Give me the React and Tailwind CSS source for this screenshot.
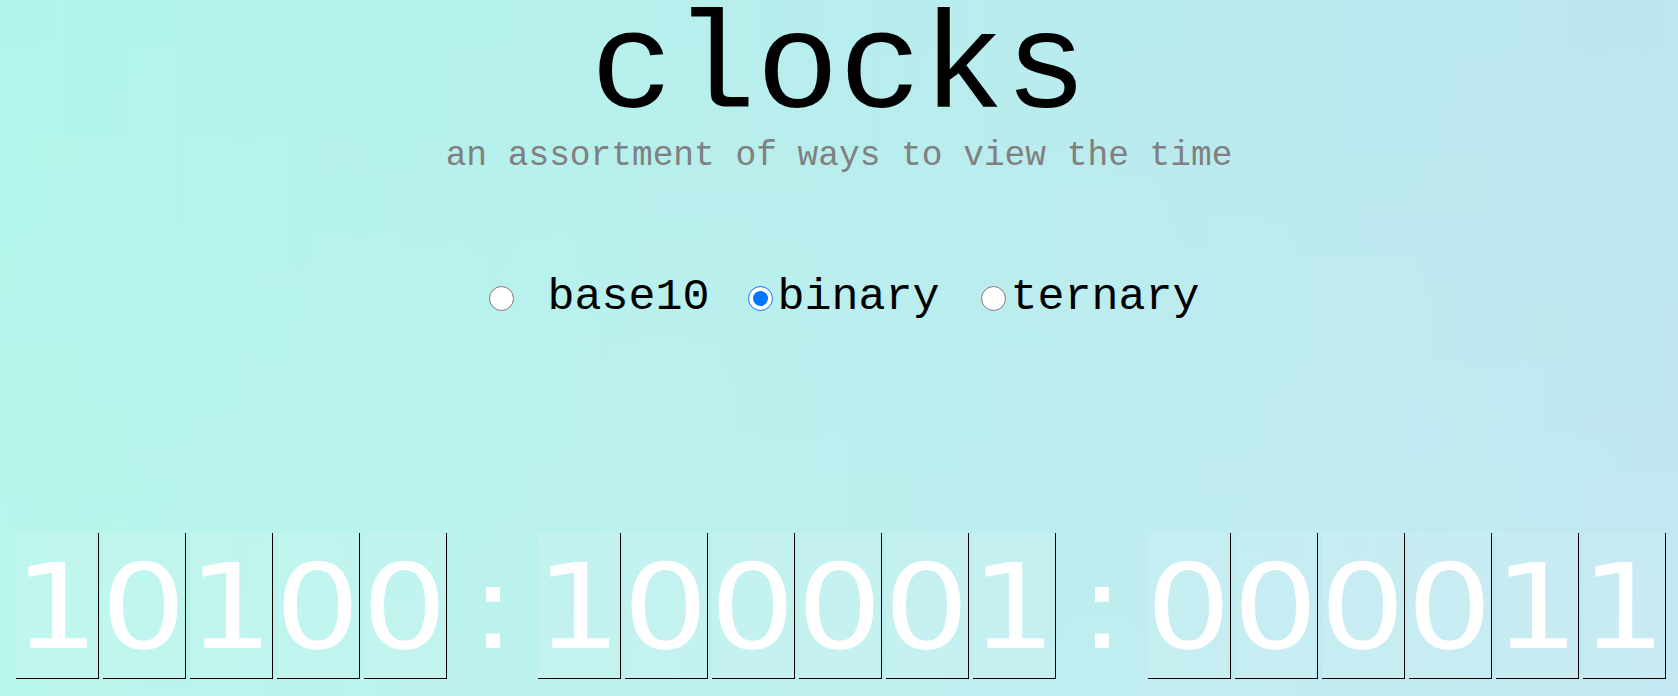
import React, { useState } from 'react';

const mono = { fontFamily: '"Liberation Mono", "DejaVu Sans Mono", monospace' };

// hh:mm:ss shown in binary, one box per digit
const groups = [
  ['1', '0', '1', '0', '0'],
  ['1', '0', '0', '0', '0', '1'],
  ['0', '0', '0', '0', '1', '1'],
];

function Digit({ value }) {
  return (
    <div className="mx-[2px] box-border h-[146px] w-[83px] shrink-0 border-r border-b border-black bg-white/10 pt-[4px] text-center leading-[141px] text-white">
      <span className="inline-block scale-x-[114%]">{value}</span>
    </div>
  );
}

function Colon({ wide }) {
  return (
    <div className={`${wide ? 'w-[88px]' : 'w-[87px]'} box-border h-[146px] shrink-0 pt-[4px] text-center leading-[141px] text-white`}>
      <span className="inline-block scale-x-[114%]">:</span>
    </div>
  );
}

export default function App() {
  const [mode, setMode] = useState('binary');

  return (
    <div className="h-[696px] w-full overflow-hidden bg-gradient-to-r from-[#b1f5ea] to-[#bde6f0]">
      <div className="flex h-full flex-col bg-gradient-to-b from-transparent to-white/10">
        {/* Header */}
        <h1 className="text-center text-[138px] leading-[140px] font-normal text-black" style={mono}>
          clocks
        </h1>
        <p className="mt-[4px] text-center text-[34.5px] leading-[24px] text-[#808080]" style={mono}>
          an assortment of ways to view the time
        </p>

        {/* Mode picker */}
        <div className="mt-[108px] flex items-center justify-center pl-[11px] text-[45px] leading-[44px] text-black" style={mono}>
          <input
            type="radio"
            name="mode"
            className="m-0 h-[25px] w-[25px]"
            checked={mode === 'base10'}
            onChange={() => setMode('base10')}
          />
          <span className="ml-[33px]">base10</span>
          <input
            type="radio"
            name="mode"
            className="m-0 ml-[39px] h-[25px] w-[25px]"
            checked={mode === 'binary'}
            onChange={() => setMode('binary')}
          />
          <span className="ml-[4px]">binary</span>
          <input
            type="radio"
            name="mode"
            className="m-0 ml-[41px] h-[25px] w-[25px]"
            checked={mode === 'ternary'}
            onChange={() => setMode('ternary')}
          />
          <span className="ml-[5px]">ternary</span>
        </div>

        {/* Clock */}
        <div
          className="mt-[213px] flex pl-[14px] text-[118px]"
          style={{ fontFamily: '"DejaVu Sans", sans-serif' }}
        >
          {groups[0].map((d, i) => <Digit key={'h' + i} value={d} />)}
          <Colon />
          {groups[1].map((d, i) => <Digit key={'m' + i} value={d} />)}
          <Colon wide />
          {groups[2].map((d, i) => <Digit key={'s' + i} value={d} />)}
        </div>
      </div>
    </div>
  );
}
